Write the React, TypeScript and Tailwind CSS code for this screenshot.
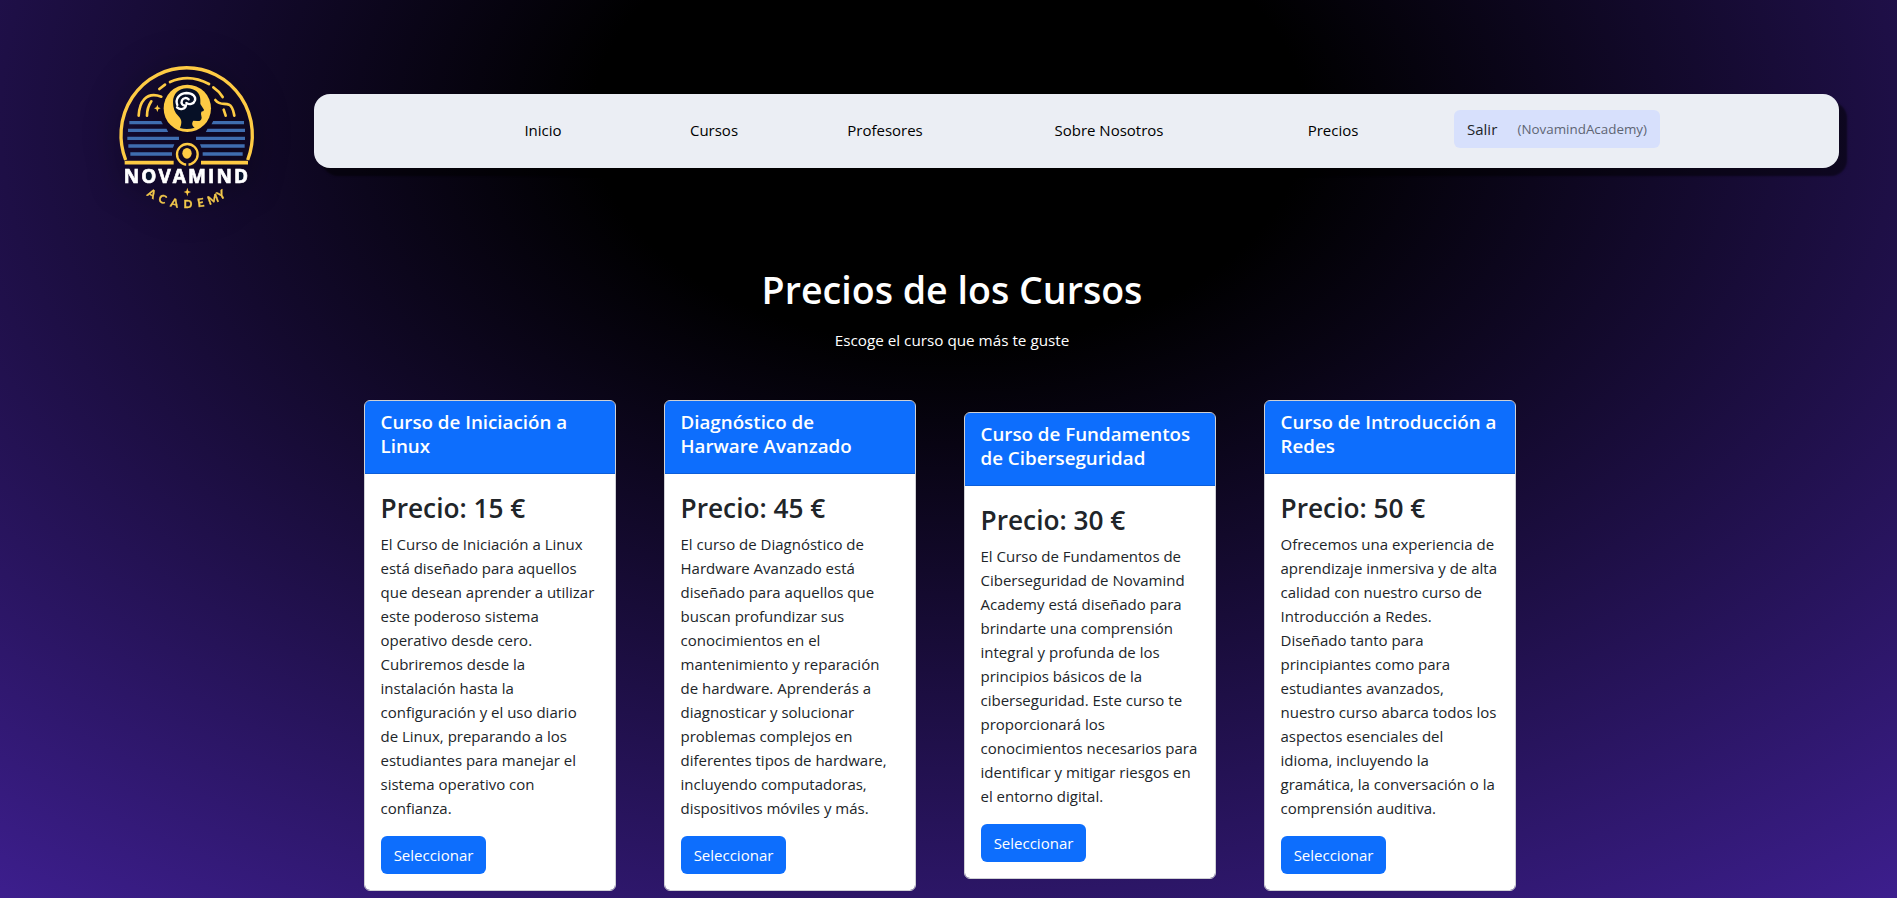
type Course = { title: string[]; price: string; text: string[] };

const courses: Course[] = [
  {
    title: ["Curso de Iniciación a", "Linux"],
    price: "15 €",
    text: [
      "El Curso de Iniciación a Linux",
      "está diseñado para aquellos",
      "que desean aprender a utilizar",
      "este poderoso sistema",
      "operativo desde cero.",
      "Cubriremos desde la",
      "instalación hasta la",
      "configuración y el uso diario",
      "de Linux, preparando a los",
      "estudiantes para manejar el",
      "sistema operativo con",
      "confianza.",
    ],
  },
  {
    title: ["Diagnóstico de", "Harware Avanzado"],
    price: "45 €",
    text: [
      "El curso de Diagnóstico de",
      "Hardware Avanzado está",
      "diseñado para aquellos que",
      "buscan profundizar sus",
      "conocimientos en el",
      "mantenimiento y reparación",
      "de hardware. Aprenderás a",
      "diagnosticar y solucionar",
      "problemas complejos en",
      "diferentes tipos de hardware,",
      "incluyendo computadoras,",
      "dispositivos móviles y más.",
    ],
  },
  {
    title: ["Curso de Fundamentos", "de Ciberseguridad"],
    price: "30 €",
    text: [
      "El Curso de Fundamentos de",
      "Ciberseguridad de Novamind",
      "Academy está diseñado para",
      "brindarte una comprensión",
      "integral y profunda de los",
      "principios básicos de la",
      "ciberseguridad. Este curso te",
      "proporcionará los",
      "conocimientos necesarios para",
      "identificar y mitigar riesgos en",
      "el entorno digital.",
    ],
  },
  {
    title: ["Curso de Introducción a", "Redes"],
    price: "50 €",
    text: [
      "Ofrecemos una experiencia de",
      "aprendizaje inmersiva y de alta",
      "calidad con nuestro curso de",
      "Introducción a Redes.",
      "Diseñado tanto para",
      "principiantes como para",
      "estudiantes avanzados,",
      "nuestro curso abarca todos los",
      "aspectos esenciales del",
      "idioma, incluyendo la",
      "gramática, la conversación o la",
      "comprensión auditiva.",
    ],
  },
];

const links = ["Inicio", "Cursos", "Profesores", "Sobre Nosotros", "Precios"];

/** Letters of the lower arc: glyph, x, y (centre of baseline), rotation. */
const arc: [string, number, number, number][] = [
  ["A", 149, 442, 30],
  ["C", 183, 459, 21],
  ["A", 221, 471, 11],
  ["D", 264, 474, 0],
  ["E", 304, 470, -9],
  ["M", 343, 459, -20],
  ["Y", 370, 445, -31],
];

/** Blue stripes: y, left start, left end, right start, right end, slant of the inner ends. */
const stripes: [number, number, number, number, number, number][] = [
  [218, 88, 186, 337, 432, 5],
  [241, 84, 202, 320, 435, 5],
  [265, 82, 237, 288, 435, 0],
  [288, 85, 221, 302, 434, -4],
  [312, 91, 216, 308, 428, 0],
];

function Logo() {
  return (
    <svg viewBox="0 0 510 510" className="size-[170px] drop-shadow-[0_0_16px_rgba(0,0,0,0.6)]" fill="none">
      <g stroke="#fecb44" strokeWidth="10">
        <path d="M77 330 A197 202 0 1 1 443 330" />
        <path d="M74 338 H221 M303 338 H444" strokeWidth="11" />
        <g strokeWidth="8" strokeLinecap="round">
          <path d="M210 96 Q268 70 327 102" />
          <path d="M178 117 L195 104" />
          <path d="M340 112 Q358 124 368 141" />
          <path d="M116 197 C118 158 137 123 184 140" />
          <path d="M141 197 Q141 173 154 154" />
          <path d="M346 150 C360 168 374 158 387 164 C399 170 400 184 403 197" />
          <path d="M371 179 L377 197" />
        </g>
      </g>
      <g fill="#3f6db0">
        {stripes.map(([y, a, b, c, d, s]) => (
          <path
            key={y}
            d={`M${a} ${y - 5}H${b - s / 2}L${b + s / 2} ${y + 5}H${a}ZM${c + s / 2} ${y - 5}H${d}V${y + 5}H${c - s / 2}Z`}
          />
        ))}
      </g>
      <path d="M172 164 L175 172 L182 175 L175 178 L172 186 L169 178 L162 175 L169 172Z" fill="#fecb44" />
      <circle cx="262" cy="175" r="71" fill="#fecb44" />
      <path
        d="M240 234 C247 217 245 208 235 198 C224 188 219 174 219 156 C219 132 236 115 261 115 C286 115 301 130 301 150 L301 162 L312 179 Q313 183 304 185 L303 192 L305 203 Q304 214 292 213 L280 212 C275 218 275 227 284 233 Q262 240 240 234Z"
        fill="#061026"
      />
      <path
        d="M231 172 C240 181 256 178 258 166 C248 169 242 160 246 151 C249 143 260 142 266 148 M232 165 C225 148 237 130 259 129 C279 129 288 141 285 151 C281 163 268 165 259 159"
        stroke="#fff"
        strokeWidth="7"
        strokeLinecap="round"
        strokeLinejoin="round"
      />
      <circle cx="262" cy="313" r="31" stroke="#fecb44" strokeWidth="7" />
      <path d="M262 338 V350" stroke="#120a2b" strokeWidth="7" />
      <ellipse cx="261" cy="310" rx="14" ry="16" fill="#fecb44" />
      <ellipse cx="145" cy="378" rx="12" ry="17" fill="#07142e" />
      <path d="M412 362 H420 Q432 366 432 378 Q432 391 420 395 H412Z" fill="#07142e" />
      <text
        x="71"
        y="399"
        textLength="373"
        lengthAdjust="spacing"
        fontSize="57"
        fontWeight="700"
        fontFamily="'Open Sans', sans-serif"
        fill="#fff"
        stroke="#fff"
        strokeWidth="2"
      >
        NOVAMIND
      </text>
      <path d="M262 413 L265 423 L273 426 L265 429 L262 439 L259 429 L251 426 L259 423Z" fill="#fecb44" />
      {arc.map(([ch, x, y, r], i) => (
        <text
          key={i}
          transform={`translate(${x} ${y}) rotate(${r})`}
          textAnchor="middle"
          fontSize="35"
          fontWeight="700"
          fontFamily="Lato, sans-serif"
          fill="#f2c84b"
          stroke="#f2c84b"
          strokeWidth="1"
        >
          {ch}
        </text>
      ))}
    </svg>
  );
}

function Card({ title, price, text }: Course) {
  return (
    <article className="w-[252px] rounded-md border border-[#cfd0d4] bg-white bg-clip-padding whitespace-nowrap">
      <header className="h-[73px] rounded-t-[5px] border-b border-[#0c5ed9] bg-[#0d6efd] px-[15.5px] pt-[9px] text-[18.75px] leading-6 font-semibold text-white">
        {title.map((line) => (
          <div key={line}>{line}</div>
        ))}
      </header>
      <div className="px-[15.5px] pt-[17px] pb-4 text-[#212529]">
        <h2 className="mb-[6.6px] text-[26.25px] leading-[34px] font-semibold">Precio: {price}</h2>
        <div className="text-[15px] leading-6">
          {text.map((line) => (
            <div key={line}>{line}</div>
          ))}
        </div>
        <button className="mt-4 ml-[0.5px] block h-[38px] w-[105px] rounded-md bg-[#0d6efd] text-[15px] leading-6 text-white">
          Seleccionar
        </button>
      </div>
    </article>
  );
}

export default function App() {
  return (
    <div className="h-[898px] w-full overflow-hidden font-['Open_Sans',sans-serif]">
      <div className="h-[1200px] bg-[radial-gradient(125%_125%_at_50%_10%,#000_15%,#63e_100%)]">
        <div className="flex pt-[50px] pr-[58px] pl-[100px]">
          <Logo />
          <nav className="mt-[44px] ml-[44px] grid h-[74px] flex-1 grid-cols-[171px_171px_171px_277px_171px_277px] place-content-center items-center justify-items-center rounded-2xl bg-[#ebeef4] pb-1 text-[15px] text-black shadow-[8px_8px_2px_rgba(0,0,0,0.5)]">
            {links.map((l) => (
              <a key={l} className="pt-[3px]">
                {l}
              </a>
            ))}
            <a className="flex h-[38px] w-[206px] items-center justify-between rounded-md bg-[#d7e0fc] px-[13px] pt-px text-[#212529]">
              <span>Salir</span>
              <span className="text-[13.4px] text-[#5e6573]">(NovamindAcademy)</span>
            </a>
          </nav>
        </div>
        <div className="pt-[46px] pl-[7px] text-center text-white">
          <h1 className="text-[37.6px] leading-[48px] font-semibold">Precios de los Cursos</h1>
          <p className="mt-[14px] text-[15.25px] leading-6">Escoge el curso que más te guste</p>
        </div>
        <main className="mt-[48px] flex items-center gap-12 pl-[364px]">
          {courses.map((c) => (
            <Card key={c.price} {...c} />
          ))}
        </main>
      </div>
    </div>
  );
}
